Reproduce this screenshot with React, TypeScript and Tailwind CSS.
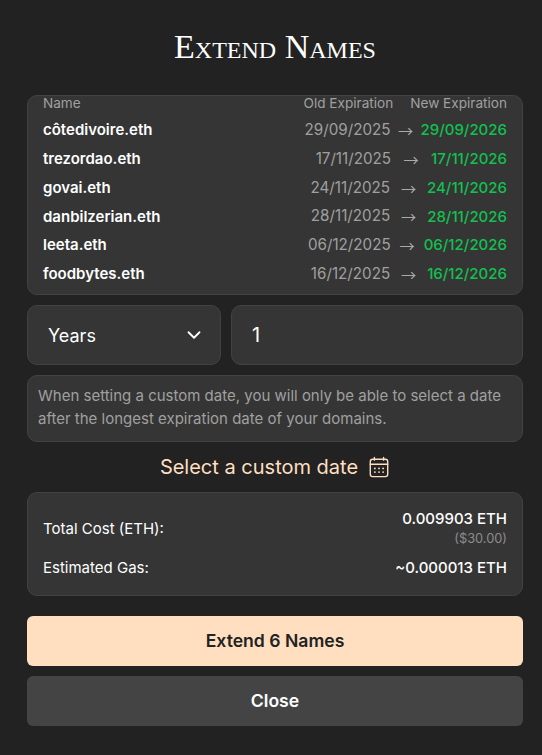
import { ChevronDown } from 'lucide-react';

const names = [
  { name: 'côtedivoire.eth', oldDate: '29/09/2025', newDate: '29/09/2026', arrow: 'w-[30px]' },
  { name: 'trezordao.eth', oldDate: '17/11/2025', newDate: '17/11/2026', arrow: 'w-[40px]' },
  { name: 'govai.eth', oldDate: '24/11/2025', newDate: '24/11/2026', arrow: 'w-[37px]' },
  { name: 'danbilzerian.eth', oldDate: '28/11/2025', newDate: '28/11/2026', arrow: 'w-[37px]' },
  { name: 'leeta.eth', oldDate: '06/12/2025', newDate: '06/12/2026', arrow: 'w-[33px]' },
  { name: 'foodbytes.eth', oldDate: '16/12/2025', newDate: '16/12/2026', arrow: 'w-[37px]' },
];

function CalendarIcon() {
  return (
    <svg className="w-[22px] h-[22px] text-[#ffdfc0]" viewBox="0 0 24 24" fill="none" stroke="currentColor" strokeWidth="1.5" strokeLinecap="round" strokeLinejoin="round">
      <path d="M7 1.5v3M17 1.5v3" />
      <rect x="2.5" y="3.5" width="19" height="19" rx="2.5" />
      <path d="M2.5 9h19" />
      <path d="M7.5 13.5h.01M12 13.5h.01M16.5 13.5h.01M7.5 17.5h.01M12 17.5h.01M16.5 17.5h.01" strokeWidth="2" />
    </svg>
  );
}

export default function App() {
  return (
    <div className="w-[542px] h-[755px] bg-[#222222] pl-[27px] pr-[19px] flex flex-col overflow-hidden font-['Inter',sans-serif]">
      {/* Title */}
      <h1 className="h-[95px] pt-[26px] text-center text-white text-[34px] leading-[42px] font-['Liberation_Serif',serif] [font-variant-caps:small-caps]">
        Extend Names
      </h1>

      {/* Names table */}
      <div className="h-[200px] bg-[#353535] border border-[#424242] rounded-[10px] px-[15px]">
        <div className="flex justify-between h-[15px] text-[13.6px] leading-[15px] text-[#a0a0a0]">
          <span>Name</span>
          <div className="flex gap-[17px]">
            <span>Old Expiration</span>
            <span>New Expiration</span>
          </div>
        </div>
        <div className="flex flex-col mt-[5px]">
          {names.map((row) => (
            <div key={row.name} className="flex items-center h-[28.8px] text-[15.2px]">
              <span className="flex-1 text-[15px] font-semibold text-white">{row.name}</span>
              <span className="text-[#a0a0a0]">{row.oldDate}</span>
              <span className={`${row.arrow} text-center text-[#aaaaaa] font-['Noto_Sans_CJK_JP',sans-serif]`}>→</span>
              <span className="text-[15px] font-medium text-[#12c04f]">{row.newDate}</span>
            </div>
          ))}
        </div>
      </div>

      {/* Duration inputs */}
      <div className="flex gap-[10px] mt-[10px] h-[60px]">
        <div className="w-[194px] bg-[#353535] border border-[#424242] rounded-[10px] pl-[20px] pr-[15px] flex items-center justify-between text-white text-[18px]">
          <span>Years</span>
          <ChevronDown className="w-[22px] h-[22px]" strokeWidth={2} />
        </div>
        <div className="flex-1 bg-[#353535] border border-[#424242] rounded-[10px] pl-[20px] flex items-center text-white text-[20px]">
          1
        </div>
      </div>

      {/* Notice */}
      <div className="mt-[10px] h-[67px] bg-[#353535] border border-[#424242] rounded-[10px] px-[10px] pt-[8px] text-[15px] leading-[23px] text-[#a0a0a0]">
        When setting a custom date, you will only be able to select a date after the longest expiration date of your domains.
      </div>

      {/* Custom date */}
      <div className="h-[50px] flex items-center justify-center gap-[10px] text-[20px] text-[#ffdfc0]">
        <span>Select a custom date</span>
        <CalendarIcon />
      </div>

      {/* Cost summary */}
      <div className="h-[104px] bg-[#353535] border border-[#424242] rounded-[10px] px-[15px] pt-[16px]">
        <div className="flex justify-between items-center text-white text-[15px]">
          <span>Total Cost (ETH):</span>
          <div className="flex flex-col items-end">
            <span className="font-medium leading-[20px]">0.009903 ETH</span>
            <span className="text-[12.8px] leading-[20px] text-[#8c8c8c]">($30.00)</span>
          </div>
        </div>
        <div className="flex justify-between items-center text-white text-[15px] mt-[8px]">
          <span>Estimated Gas:</span>
          <span className="font-medium">~0.000013 ETH</span>
        </div>
      </div>

      {/* Actions */}
      <button className="mt-[20px] h-[50px] rounded-[6px] bg-[#ffdfc0] text-[#222222] text-[17.6px] font-semibold">
        Extend 6 Names
      </button>
      <button className="mt-[10px] h-[50px] rounded-[6px] bg-[#444444] text-white text-[17.6px] font-semibold">
        Close
      </button>
    </div>
  );
}
